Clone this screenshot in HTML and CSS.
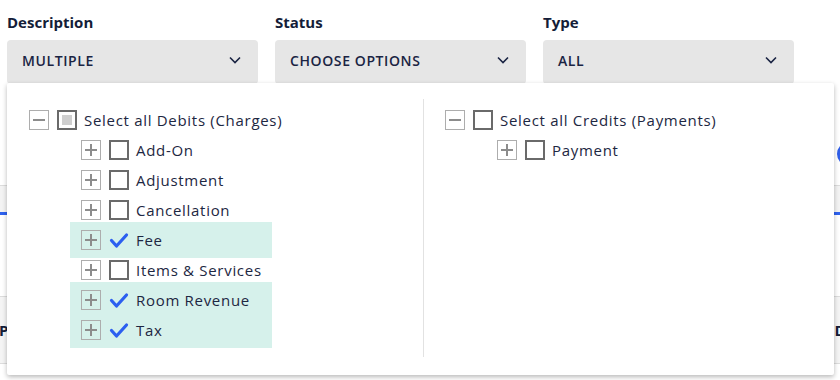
FILE: index.html
```html
<!DOCTYPE html>
<html lang="en">
<head>
  <meta charset="UTF-8" />
  <title>Transactions filter</title>
  <link rel="stylesheet" href="styles.css">
</head>
<body>
  <div class="page">
    <div class="filters">
      <div class="field">
        <div class="field-label">Description</div>
        <div class="select">MULTIPLE
          <svg class="chevron" viewBox="0 0 12 8"><path d="M1 1.5l5 5 5-5" /></svg>
        </div>
      </div>
      <div class="field">
        <div class="field-label">Status</div>
        <div class="select">CHOOSE OPTIONS
          <svg class="chevron" viewBox="0 0 12 8"><path d="M1 1.5l5 5 5-5" /></svg>
        </div>
      </div>
      <div class="field">
        <div class="field-label">Type</div>
        <div class="select">ALL
          <svg class="chevron" viewBox="0 0 12 8"><path d="M1 1.5l5 5 5-5" /></svg>
        </div>
      </div>
    </div>

    <!-- page content that sits behind the open dropdown -->
    <div class="board">
      <div class="toolbar"><span class="round-btn"></span></div>
      <div class="tabs"></div>
      <div class="table-head">
        <span class="th">Posted</span>
        <span class="th th-right">Date</span>
      </div>
    </div>

    <div class="dropdown">
      <div class="tree-col">
        <div class="node">
          <span class="toggle minus"></span>
          <span class="box partial"></span>
          <span class="node-text">Select all Debits (Charges)</span>
        </div>
        <div class="children">
          <div class="node"><span class="toggle"></span><span class="box"></span><span class="node-text">Add-On</span></div>
          <div class="node"><span class="toggle"></span><span class="box"></span><span class="node-text">Adjustment</span></div>
          <div class="node"><span class="toggle"></span><span class="box"></span><span class="node-text">Cancellation</span></div>
          <div class="node checked">
            <span class="toggle"></span>
            <svg class="tick" viewBox="0 0 20 20"><path d="M2.5 10.5l5 5.5 10-11" /></svg>
            <span class="node-text">Fee</span>
          </div>
          <div class="node"><span class="toggle"></span><span class="box"></span><span class="node-text">Items &amp; Services</span></div>
          <div class="node checked">
            <span class="toggle"></span>
            <svg class="tick" viewBox="0 0 20 20"><path d="M2.5 10.5l5 5.5 10-11" /></svg>
            <span class="node-text">Room Revenue</span>
          </div>
          <div class="node checked">
            <span class="toggle"></span>
            <svg class="tick" viewBox="0 0 20 20"><path d="M2.5 10.5l5 5.5 10-11" /></svg>
            <span class="node-text">Tax</span>
          </div>
        </div>
      </div>
      <div class="tree-col tree-col-right">
        <div class="node">
          <span class="toggle minus"></span>
          <span class="box"></span>
          <span class="node-text">Select all Credits (Payments)</span>
        </div>
        <div class="children">
          <div class="node"><span class="toggle"></span><span class="box"></span><span class="node-text">Payment</span></div>
        </div>
      </div>
    </div>
  </div>
</body>
</html>
```

FILE: styles.css
```css
* {
  margin: 0; padding: 0; box-sizing: border-box;
}
body {
  width: 840px;
  height: 380px;
  overflow: hidden;
  background: #fff;
  font-family: 'Open Sans', 'Noto Sans', sans-serif;
  color: #1d2742;
}
.page {
  position: relative;
  height: 380px;
}
.filters {
  display: flex;
  gap: 17px;
  padding: 12px 7px 0;
}
.field {
  width: 251px;
}
.field-label {
  font-size: 15px;
  font-weight: 700;
  line-height: 20px;
  color: #141d38;
  margin-bottom: 8px;
}
.select {
  height: 44px;
  background: #e6e6e6;
  border-radius: 4px;
  display: flex;
  align-items: center;
  justify-content: space-between;
  padding: 0 17px 4px 15px;
  font-size: 14px;
  font-weight: 600;
  letter-spacing: 0.6px;
  color: #1a2443;
}
.chevron {
  width: 12px;
  height: 8px;
  fill: none;
  stroke: #1a2443;
  stroke-width: 1.6;
}

/* background board */
.toolbar {
  height: 101px;
  display: flex;
  justify-content: flex-end;
  align-items: flex-start;
  padding-top: 58px;
}
.round-btn {
  width: 24px;
  height: 24px;
  border-radius: 50%;
  background: #2f5ee8;
  margin-right: -21px;
}
.tabs {
  height: 30px;
  background: #f3f3f3;
  border-top: 1px solid #dcdcdc;
  border-bottom: 3px solid #2f62ef;
}
.table-head {
  margin-top: 81px;
  height: 68px;
  background: #f4f4f4;
  border-top: 1px solid #dcdcdc;
  border-bottom: 1px solid #dcdcdc;
  display: flex;
  justify-content: space-between;
  align-items: center;
  font-size: 15px;
  font-weight: 700;
  color: #141d38;
}
.th {
  margin-left: -1px;
}
.th-right {
  margin-right: -30px;
}

/* dropdown panel */
.dropdown {
  position: absolute;
  top: 83px;
  left: 7px;
  width: 827px;
  height: 292px;
  background: #fff;
  border-radius: 2px;
  box-shadow: 0 2px 5px rgba(0,0,0,0.28);
  display: grid;
  grid-template-columns: 417px 1fr;
}
.tree-col {
  margin: 16px 0 18px;
  padding: 6px 0 0 22px;
  border-right: 1px solid #e2e2e2;
}
.tree-col-right {
  border-right: none;
  padding-left: 21px;
}
.node {
  height: 30px;
  display: flex;
  align-items: center;
  gap: 8px;
  font-size: 15px;
  letter-spacing: 0.7px;
  color: #1d2742;
}
.node-text {
  margin-left: -1px;
}
.children {
  margin-left: 41px;
}
.children .node {
  width: 202px;
  padding-left: 11px;
}
.node.checked {
  background: #d6f1eb;
  box-shadow: 0 -3px 0 #d6f1eb, 0 3px 0 #d6f1eb;
}
.toggle {
  position: relative;
  width: 20px;
  height: 20px;
  flex-shrink: 0;
  border: 1px solid #adadad;
}
.toggle::before,
.toggle::after {
  content: "";
  position: absolute;
  background: #8c8c8c;
}
.toggle::before {
  left: 3px;
  right: 3px;
  top: 8px;
  height: 2px;
}
.toggle::after {
  top: 3px;
  bottom: 3px;
  left: 8px;
  width: 2px;
}
.toggle.minus::after {
  display: none;
}
.box {
  position: relative;
  width: 20px;
  height: 20px;
  flex-shrink: 0;
  border: 2px solid #6a6a6a;
  background: #fff;
}
.box.partial::after {
  content: "";
  position: absolute;
  left: 3px;
  top: 3px;
  width: 10px;
  height: 10px;
  background: #cfcfcf;
}
.tick {
  width: 20px;
  height: 20px;
  flex-shrink: 0;
  fill: none;
  stroke: #2c5ff0;
  stroke-width: 3.2;
  stroke-linecap: round;
  stroke-linejoin: round;
}
```
